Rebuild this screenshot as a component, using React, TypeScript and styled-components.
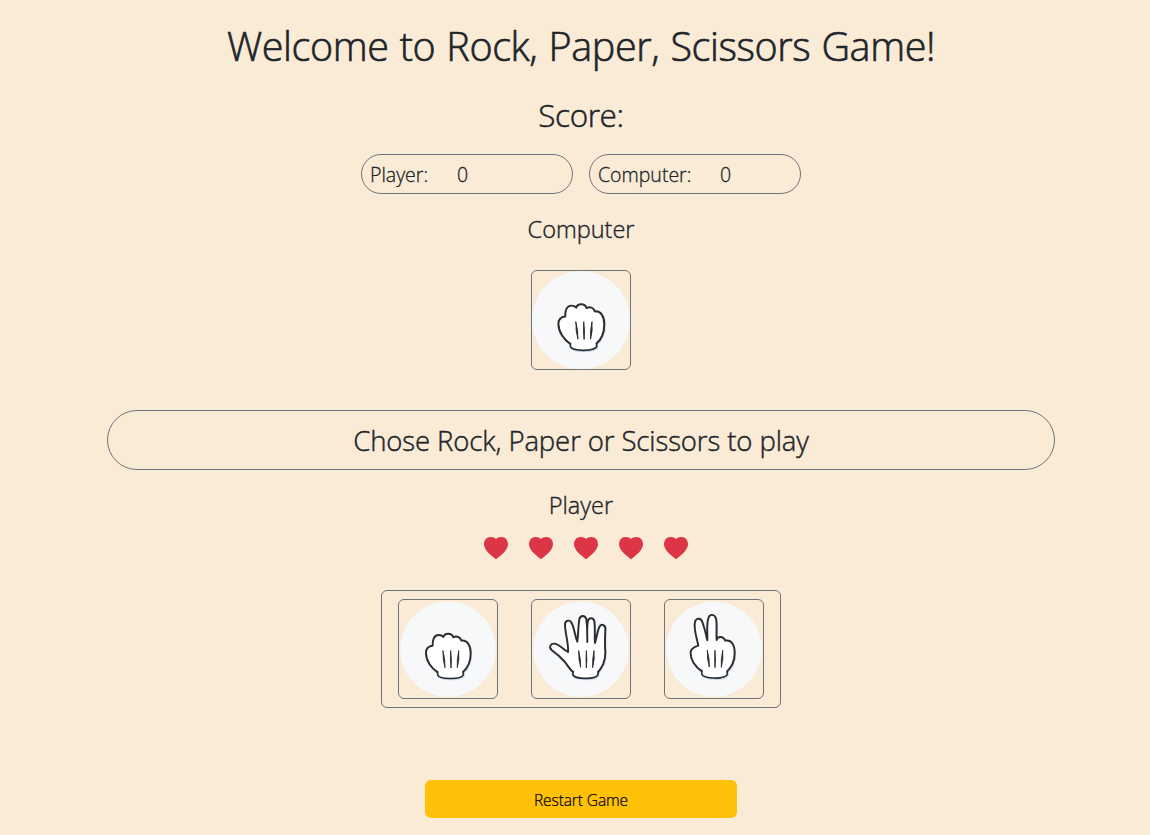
import React, { useState } from "react";
import styled, { createGlobalStyle } from "styled-components";

const GlobalStyle = createGlobalStyle`
  *, *::before, *::after { box-sizing: border-box; }
  body {
    margin: 0;
    background: #faebd7;
    color: #212529;
    font-family: "Segoe UI", "Open Sans", "Noto Sans", sans-serif;
    font-size: 16px;
    font-weight: 300;
    overflow: hidden;
  }
`;

const Page = styled.main`
  width: 1162px;
  height: 835px;
  display: flex;
  flex-direction: column;
  align-items: center;
`;

const Heading = styled.h1<{ $size: number; $line: number; $top: number; $tracking: number }>`
  margin: ${(p) => p.$top}px 0 0;
  font-size: ${(p) => p.$size}px;
  line-height: ${(p) => p.$line}px;
  letter-spacing: ${(p) => p.$tracking}px;
  word-spacing: 0.03em;
  font-weight: 300;
  -webkit-text-stroke: 0.016em currentColor;
  white-space: nowrap;
`;

const ScoreRow = styled.div`
  display: flex;
  gap: 16px;
  margin-top: 21px;
`;

const ScorePill = styled.div`
  display: flex;
  align-items: center;
  width: 212px;
  height: 40px;
  padding: 0 8px;
  border: 1px solid #6c757d;
  border-radius: 20px;
  font-size: 19.5px;
  -webkit-text-stroke: 0.016em currentColor;
`;

const ScoreLabel = styled.span<{ $width: number }>`
  width: ${(p) => p.$width}px;
  white-space: nowrap;
`;

const Card = styled.button`
  width: 100px;
  height: 100px;
  padding: 0;
  border: 1px solid #6c757d;
  border-radius: 6px;
  background: transparent;
  overflow: hidden;
  svg { display: block; width: 98px; height: 98px; }
`;

const ComputerArea = styled.div`
  margin-top: 26px;
  height: 100px;
`;

const Message = styled.div`
  display: flex;
  align-items: center;
  justify-content: center;
  width: 948px;
  height: 60px;
  margin-top: 40px;
  padding-top: 1px;
  border: 1px solid #6c757d;
  border-radius: 30px;
  font-size: 27.5px;
  letter-spacing: -0.1px;
  -webkit-text-stroke: 0.016em currentColor;
`;

const Lives = styled.div`
  display: flex;
  gap: 21.2px;
  height: 24px;
  margin: 16px 0 0 10px;
  svg { display: block; width: 24px; height: 24px; fill: #dc3545; }
`;

const Choices = styled.div`
  display: flex;
  justify-content: space-between;
  width: 400px;
  height: 118px;
  margin-top: 30px;
  padding: 8px 16px;
  border: 1px solid #6c757d;
  border-radius: 6px;
`;

const Restart = styled.button`
  width: 312px;
  height: 38px;
  margin-top: 72px;
  padding: 2px 0 0;
  border: 0;
  border-radius: 6px;
  background: #ffc107;
  color: #000;
  font-family: inherit;
  font-weight: 300;
  font-size: 15.5px;
  letter-spacing: -0.1px;
  -webkit-text-stroke: 0.016em currentColor;
`;

type Move = "rock" | "paper" | "scissors";

const outlines: Record<Move, string> = {
  rock: "M137 241C119 229 102 207 102 183C102 170 110 162 122 161C121 144 126 129 140 129C146 129 151 131 154 135C158 122 179 121 184 136C193 131 206 135 208 146C226 143 236 161 236 184C236 210 228 227 213 240",
  paper: "M145 241C134 232 128 221 120 210C108 196 94 184 80 174C70 165 77 154 89 155C103 158 115 172 129 180C132 158 120 122 120 98C120 83 136 82 141 95C148 112 150 132 157 149C160 126 160 98 163 82C166 69 180 69 184 82C187 105 187 127 187 150C187 124 185 100 189 86C193 75 206 77 208 89C211 110 208 132 210 153C215 137 217 118 223 105C228 94 241 98 241 110C240 135 239 157 241 181C242 209 231 225 219 241",
  scissors: "M132 238C113 225 98 207 98 184C97 174 105 166 121 161C117 139 106 111 111 89C116 76 129 78 133 90C139 107 144 126 148 145C149 121 145 97 151 79C155 64 170 66 174 80C178 101 174 123 176 144C178 132 196 131 202 146C221 142 230 160 230 184C230 209 221 225 207 239",
};

const cuffs: Record<Move, { fill: string; line: string }> = {
  rock: {
    fill: "M139 226L137 249C143 263 207 263 214 249L211 226Z",
    line: "M137 239L137 249C143 263 207 263 214 249L213 239",
  },
  paper: {
    fill: "M147 226L143 247C149 263 212 263 219 248L217 226Z",
    line: "M145 239L143 247C149 263 212 263 219 248L219 239",
  },
  scissors: {
    fill: "M134 224L131 246C138 262 200 262 208 247L205 224Z",
    line: "M132 236L131 246C138 262 200 262 208 247L207 237",
  },
};

const creases: Record<Move, string> = {
  rock: "M153 177Q152 204 159 227Q160 202 153 177ZM176 177Q174 203 177 228Q180 203 176 177ZM200 177Q194 203 196 227Q203 202 200 177Z",
  paper: "M161 177Q160 203 167 226Q168 202 161 177ZM184 177Q182 203 184 228Q187 203 184 177ZM207 177Q201 203 203 227Q210 202 207 177Z",
  scissors: "M148 176Q147 202 154 225Q155 200 148 176ZM171 176Q169 202 171 227Q174 202 171 176ZM194 176Q188 202 190 226Q197 201 194 176Z",
};

const names: Record<Move, string> = { rock: "Rock", paper: "Paper", scissors: "Scissors" };

function Hand({ move, zoom = 1 }: { move: Move; zoom?: number }) {
  const transform = `translate(168 171) scale(${zoom}) translate(-168 -171)`;
  return (
    <svg viewBox="21 24 294 294" role="img" aria-label={names[move]}>
      <g transform={transform} strokeLinejoin="round" strokeLinecap="round">
        <circle cx="168" cy="171.5" r="143" fill="#f7f8fa" />
        <g transform="translate(1.5 2.5)" fill="#b9c8e2" stroke="#b9c8e2" strokeWidth="6" opacity="0.75">
          <path d={outlines[move]} />
          <path d={cuffs[move].fill} />
        </g>
        <path d={outlines[move]} fill="#fff" stroke="#2c2e30" strokeWidth="5.8" />
        <path d={cuffs[move].fill} fill="#fff" />
        <path d={cuffs[move].line} fill="none" stroke="#2c2e30" strokeWidth="5" />
        <path d={creases[move]} fill="#282a2c" stroke="#282a2c" strokeWidth="2.6" />
      </g>
    </svg>
  );
}

function Heart() {
  return (
    <svg viewBox="0 0 24 24" aria-hidden="true">
      <path d="M12 23.2C8.2 20 0 14.6 0 8.2C0 3.8 2.8 1 6.6 1C9 1 11 1.9 12 3C13 1.9 15 1 17.4 1C21.2 1 24 3.8 24 8.2C24 14.6 15.8 20 12 23.2Z" />
    </svg>
  );
}

export default function App() {
  const [computer, setComputer] = useState<Move>("rock");
  const moves: Move[] = ["rock", "paper", "scissors"];
  return (
    <>
      <GlobalStyle />
      <Page>
        <Heading $size={39.5} $line={48} $top={22} $tracking={-0.38}>Welcome to Rock, Paper, Scissors Game!</Heading>
        <Heading as="h2" $size={31.5} $line={37} $top={26} $tracking={-0.4}>Score:</Heading>
        <ScoreRow>
          <ScorePill><ScoreLabel $width={87}>Player:</ScoreLabel>0</ScorePill>
          <ScorePill><ScoreLabel $width={122}>Computer:</ScoreLabel>0</ScorePill>
        </ScoreRow>
        <Heading as="h3" $size={23.5} $line={29} $top={21} $tracking={0}>Computer</Heading>
        <ComputerArea>
          <Card as="div"><Hand move={computer} zoom={1.027} /></Card>
        </ComputerArea>
        <Message>Chose Rock, Paper or Scissors to play</Message>
        <Heading as="h3" $size={23.5} $line={29} $top={21} $tracking={0}>Player</Heading>
        <Lives>
          {[0, 1, 2, 3, 4].map((life) => <Heart key={life} />)}
        </Lives>
        <Choices>
          {moves.map((move) => (
            <Card key={move} onClick={() => setComputer(moves[Math.floor(Math.random() * 3)])}>
              <Hand move={move} />
            </Card>
          ))}
        </Choices>
        <Restart onClick={() => setComputer("rock")}>Restart Game</Restart>
      </Page>
    </>
  );
}
